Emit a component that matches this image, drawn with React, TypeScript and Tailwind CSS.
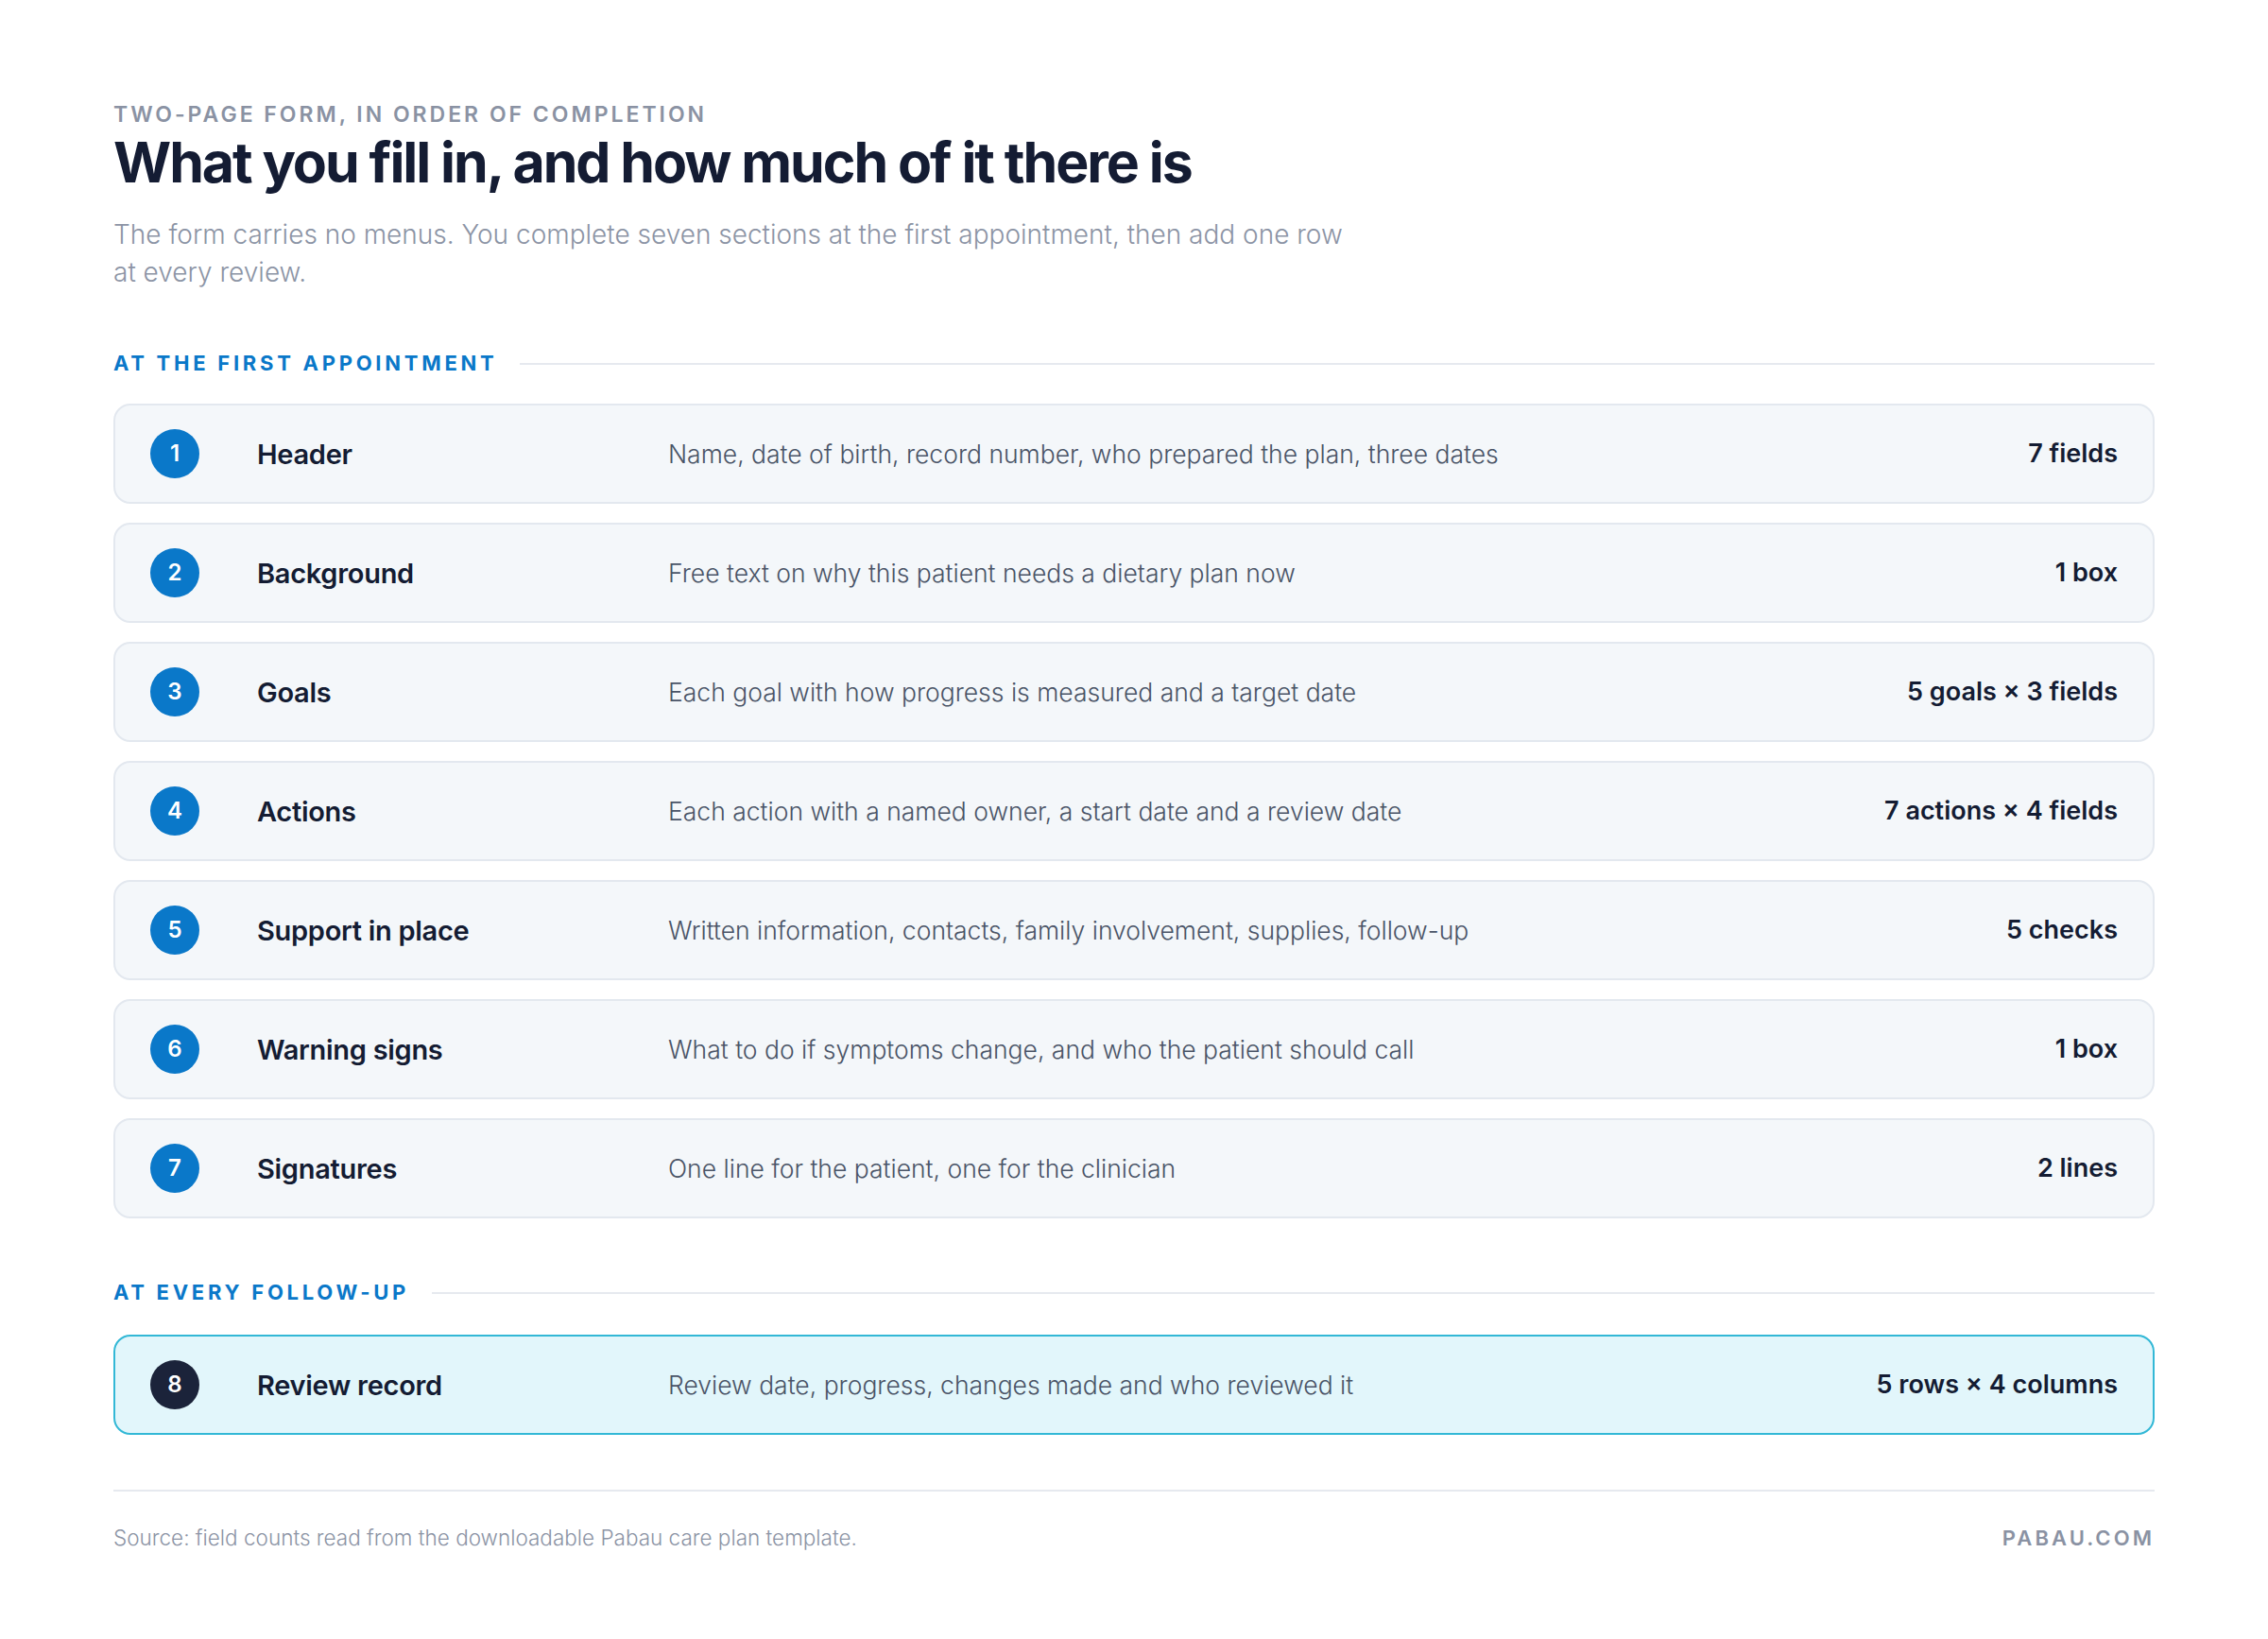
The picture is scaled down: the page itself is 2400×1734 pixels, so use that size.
import React from "react";

interface Section {
  n: number;
  title: string;
  desc: string;
  count: string;
}

const firstVisit: Section[] = [
  { n: 1, title: "Header", desc: "Name, date of birth, record number, who prepared the plan, three dates", count: "7 fields" },
  { n: 2, title: "Background", desc: "Free text on why this patient needs a dietary plan now", count: "1 box" },
  { n: 3, title: "Goals", desc: "Each goal with how progress is measured and a target date", count: "5 goals × 3 fields" },
  { n: 4, title: "Actions", desc: "Each action with a named owner, a start date and a review date", count: "7 actions × 4 fields" },
  { n: 5, title: "Support in place", desc: "Written information, contacts, family involvement, supplies, follow-up", count: "5 checks" },
  { n: 6, title: "Warning signs", desc: "What to do if symptoms change, and who the patient should call", count: "1 box" },
  { n: 7, title: "Signatures", desc: "One line for the patient, one for the clinician", count: "2 lines" },
];

const SectionLabel = ({ children }: { children: React.ReactNode }) => (
  <div className="flex items-center gap-6">
    <span className="text-[22px] font-bold uppercase tracking-[0.17em] text-[#0a78c9] whitespace-nowrap">
      {children}
    </span>
    <div className="h-[2px] flex-1 bg-[#e6e9ef]" />
  </div>
);

const Row = ({ s, highlight = false }: { s: Section; highlight?: boolean }) => (
  <div
    className={
      highlight
        ? "flex h-[106px] items-center rounded-[18px] border-2 border-[#33b8d6] bg-[#e2f6fb] px-[37px]"
        : "flex h-[106px] items-center rounded-[18px] border-2 border-[#e3e8ef] bg-[#f4f7fa] px-[37px]"
    }
  >
    <div
      className={
        highlight
          ? "flex h-[52px] w-[52px] shrink-0 items-center justify-center rounded-full bg-[#1b233a] text-[24px] font-semibold text-white"
          : "flex h-[52px] w-[52px] shrink-0 items-center justify-center rounded-full bg-[#0a78c9] text-[24px] font-semibold text-white"
      }
    >
      {s.n}
    </div>
    <div className="ml-[61px] w-[435px] shrink-0 text-[29px] font-semibold tracking-[-0.01em] text-[#141c33]">
      {s.title}
    </div>
    <div className="flex-1 text-[26.5px] font-light text-[#4a5467]">{s.desc}</div>
    <div className="shrink-0 text-[27px] font-semibold text-[#141c33]">{s.count}</div>
  </div>
);

export default function App() {
  return (
    <div
      className="min-h-screen w-[2400px] bg-white px-[120px] pt-[104px] pb-[60px]"
      style={{ fontFamily: "Inter, 'Noto Sans', sans-serif" }}
    >
      <div className="text-[23px] font-semibold uppercase tracking-[0.13em] text-[#8a92a3]">
        Two-page form, in order of completion
      </div>
      <h1 className="mt-[1px] text-[59px] font-bold leading-[1.1] tracking-[-0.035em] text-[#141c33]">
        What you fill in, and how much of it there is
      </h1>
      <p className="mt-[24px] max-w-[1320px] text-[28px] font-light leading-[40px] text-[#8c94a5]">
        The form carries no menus. You complete seven sections at the first appointment, then add one row at every review.
      </p>

      <div className="mt-[60px]">
        <SectionLabel>At the first appointment</SectionLabel>
      </div>
      <div className="mt-[26px] flex flex-col gap-5">
        {firstVisit.map((s) => (
          <Row key={s.n} s={s} />
        ))}
      </div>

      <div className="mt-[62px]">
        <SectionLabel>At every follow-up</SectionLabel>
      </div>
      <div className="mt-[28px]">
        <Row
          highlight
          s={{ n: 8, title: "Review record", desc: "Review date, progress, changes made and who reviewed it", count: "5 rows × 4 columns" }}
        />
      </div>

      <div className="mt-[58px] h-[2px] bg-[#e6e9ef]" />
      <div className="mt-[32px] flex items-center justify-between">
        <span className="text-[22.5px] font-light text-[#8c94a5]">
          Source: field counts read from the downloadable Pabau care plan template.
        </span>
        <span className="text-[22px] font-semibold uppercase tracking-[0.14em] text-[#8a92a3]">pabau.com</span>
      </div>
    </div>
  );
}
